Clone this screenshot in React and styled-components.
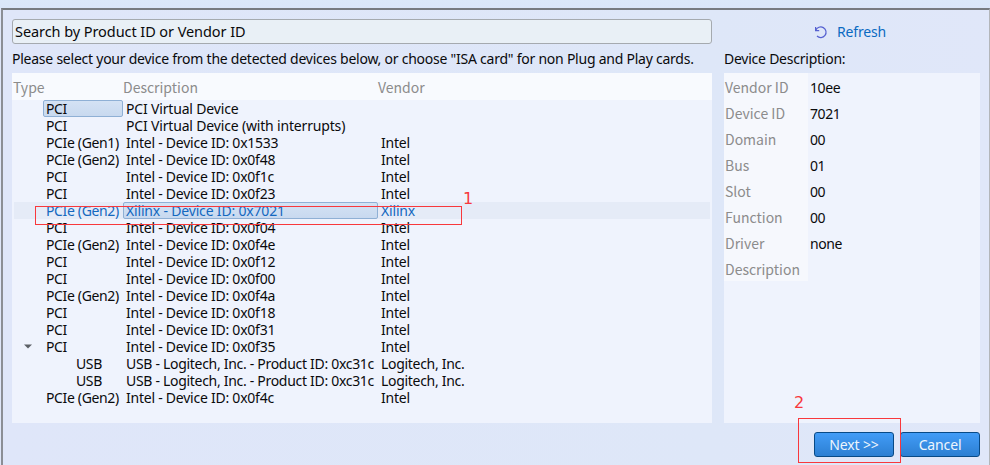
import React from "react";
import styled, { createGlobalStyle, css } from "styled-components";

const Global = createGlobalStyle`
  * { box-sizing: border-box; }
  body {
    margin: 0;
    overflow: hidden;
    background: #dbe7f8;
    font-family: "Noto Sans", sans-serif;
    font-size: 14px;
    letter-spacing: -0.24px;
    color: #0a0a0c;
  }
`;

const Screen = styled.main`
  position: relative;
  width: 990px;
  height: 465px;
  padding: 8px 0 0 1px;
  background: linear-gradient(#dbe8f9, #dae6f9 8px, #dfe6f8 9px);
`;

const Dialog = styled.section`
  height: 457px;
  padding: 9px 9px 0;
  display: flex;
  flex-direction: column;
  border: solid;
  border-width: 2px 1px 0 2px;
  border-color: #777b80 #b3b6ba #777b80 #8b8e95;
  background: linear-gradient(90deg, #dfe6f9, #dee7f8 72%, #e0e7f9);
`;

const Columns = styled.div`
  display: grid;
  grid-template-columns: 700px 256px;
  grid-template-rows: 25px 29px 350px;
  column-gap: 12px;
`;

const Search = styled.div`
  display: flex;
  align-items: center;
  padding: 0 0 2px 2px;
  border: 1px solid #a5aaaf;
  border-radius: 3px;
  background: #e9f0f6;
  font-size: 14.5px;
  letter-spacing: -0.07px;
  line-height: 20px;
  white-space: pre;
`;

const Refresh = styled.button`
  display: flex;
  align-items: center;
  gap: 9px;
  padding: 0 0 0 90px;
  border: 0;
  background: none;
  color: #0a6ac2;
  font: inherit;
  letter-spacing: -0.15px;
  white-space: pre;
`;

const Caption = styled.div`
  display: flex;
  align-items: center;
  padding-bottom: 1px;
  white-space: pre;
`;

const Panel = styled.div`
  background: #eff3fd;
`;

const mutedText = css`
  color: #8c8c8c;
  font-family: "Noto Sans CJK SC", sans-serif;
  letter-spacing: 0;
`;

const Header = styled.div`
  display: grid;
  grid-template-columns: 110px 255px 1fr;
  height: 27px;
  padding-left: 1px;
  line-height: 29px;
  background: #f8fafe;
  ${mutedText}
`;

const Row = styled.div`
  display: grid;
  grid-template-columns: 31px 80px 255px 1fr;
  height: 17px;
  margin-right: 2px;
  line-height: 17px;
  white-space: pre;
  color: ${(p) => (p.$active ? "#1468bf" : "inherit")};
  background: ${(p) => (p.$active ? "linear-gradient(90deg, transparent 2px, #e5ebf7 2px)" : "none")};
`;

const Cell = styled.span`
  padding-left: ${(p) => (p.$nested ? 33 : 3)}px;
  line-height: 15px;
  letter-spacing: ${(p) => p.$spacing ?? -0.24}px;
  border: 1px solid transparent;
  border-left-width: 0;
  ${(p) =>
    p.$selected &&
    css`
      padding-left: 2px;
      border: 1px solid #8fb0d5;
      border-radius: 2px;
      background: linear-gradient(#d4e2f4, #c8d9ef);
    `}
`;

const Toggle = styled.span`
  display: flex;
  align-items: center;
  justify-content: center;
`;

const Details = styled.dl`
  display: grid;
  grid-template-columns: 84px 1fr;
  grid-template-rows: repeat(8, 26px);
  margin: 0;
`;

const Term = styled.dt`
  padding-left: 1px;
  line-height: 29px;
  height: 26px;
  background: #f6f8fd;
  ${mutedText}
`;

const Value = styled.dd`
  margin: 0;
  padding-left: 2px;
  line-height: 29px;
  letter-spacing: -0.4px;
`;

const Actions = styled.footer`
  display: flex;
  justify-content: flex-end;
  gap: 6px;
  padding-top: 9px;
`;

const Button = styled.button`
  width: 80px;
  height: 25px;
  padding: 0;
  border: 1px solid #084a86;
  border-radius: 3px;
  background: linear-gradient(#429cf7, #2c7fd2);
  color: #edf5fd;
  font: inherit;
  line-height: 23px;
  letter-spacing: -0.15px;
`;

const Mark = styled.div`
  position: absolute;
  left: ${(p) => p.$x}px;
  top: ${(p) => p.$y}px;
  width: ${(p) => p.$w}px;
  height: ${(p) => p.$h}px;
  border: 1px solid #f8383c;
`;

const MarkLabel = styled.span`
  position: absolute;
  left: ${(p) => p.$x}px;
  top: ${(p) => p.$y}px;
  color: #f8383c;
  font: 16px/20px "DejaVu Sans", sans-serif;
`;

const intel = (type, id, extra) => ({ type, text: `Intel - Device ID: ${id}`, vendor: "Intel", ...extra });
const usb = {
  type: "USB",
  text: "USB - Logitech, Inc. - Product ID: 0xc31c",
  vendor: "Logitech, Inc.",
  nested: true,
  spacing: -0.3,
};

const devices = [
  { type: "PCI", text: "PCI Virtual Device", vendor: "", selected: "type", spacing: -0.17 },
  { type: "PCI", text: "PCI Virtual Device (with interrupts)", vendor: "", spacing: -0.17 },
  intel("PCIe (Gen1)", "0x1533"),
  intel("PCIe (Gen2)", "0x0f48"),
  intel("PCI", "0x0f1c"),
  intel("PCI", "0x0f23"),
  { type: "PCIe (Gen2)", text: "Xilinx - Device ID: 0x7021", vendor: "Xilinx", selected: "text", active: true, spacing: -0.18 },
  intel("PCI", "0x0f04"),
  intel("PCIe (Gen2)", "0x0f4e"),
  intel("PCI", "0x0f12"),
  intel("PCI", "0x0f00"),
  intel("PCIe (Gen2)", "0x0f4a"),
  intel("PCI", "0x0f18"),
  intel("PCI", "0x0f31"),
  intel("PCI", "0x0f35", { open: true }),
  usb,
  usb,
  intel("PCIe (Gen2)", "0x0f4c"),
];

const details = [
  ["Vendor ID", "10ee"],
  ["Device ID", "7021"],
  ["Domain", "00"],
  ["Bus", "01"],
  ["Slot", "00"],
  ["Function", "00"],
  ["Driver", "none"],
  ["Description", ""],
];

const RefreshIcon = () => (
  <svg width="14" height="14" viewBox="0 0 14 14" fill="none" stroke="#5560d0" strokeWidth="1.2">
    <path d="M1.6 2v3.6h3.6M1.8 5.4A5.3 5.3 0 1 1 3 11" />
  </svg>
);

const Caret = () => (
  <svg width="8" height="5" viewBox="0 0 8 5">
    <path d="M0 .5h8L4 4.5z" fill="#5c6066" />
  </svg>
);

export default function App() {
  return (
    <Screen>
      <Global />
      <Dialog>
        <Columns>
          <Search>Search by Product ID or Vendor ID</Search>
          <Refresh>
            <RefreshIcon />
            Refresh
          </Refresh>
          <Caption>Please select your device from the detected devices below, or choose "ISA card" for non Plug and Play cards.</Caption>
          <Caption>Device Description:</Caption>
          <Panel>
            <Header>
              <span>Type</span>
              <span>Description</span>
              <span>Vendor</span>
            </Header>
            {devices.map((d, i) => (
              <Row key={i} $active={d.active}>
                <Toggle>{d.open && <Caret />}</Toggle>
                <Cell $nested={d.nested} $selected={d.selected === "type"} $spacing={-0.36}>{d.type}</Cell>
                <Cell $selected={d.selected === "text"} $spacing={d.spacing}>{d.text}</Cell>
                <Cell $spacing={d.spacing}>{d.vendor}</Cell>
              </Row>
            ))}
          </Panel>
          <Panel>
            <Details>
              {details.map(([k, v]) => (
                <React.Fragment key={k}>
                  <Term>{k}</Term>
                  <Value>{v}</Value>
                </React.Fragment>
              ))}
            </Details>
          </Panel>
        </Columns>
        <Actions>
          <Button>Next &gt;&gt;</Button>
          <Button>Cancel</Button>
        </Actions>
      </Dialog>
      <Mark $x={35} $y={206} $w={427} $h={19} />
      <MarkLabel $x={463} $y={189}>1</MarkLabel>
      <Mark $x={798} $y={418} $w={103} $h={45} />
      <MarkLabel $x={794} $y={393}>2</MarkLabel>
    </Screen>
  );
}
